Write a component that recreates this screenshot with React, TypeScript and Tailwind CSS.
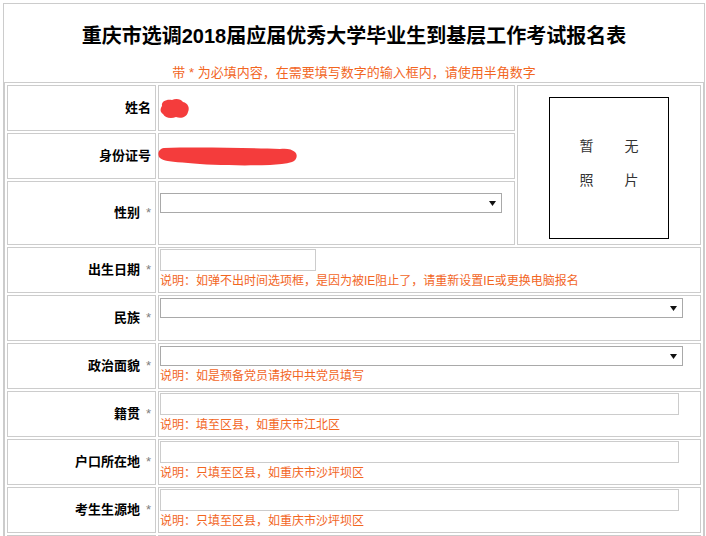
import type { ReactNode } from 'react';

type Field = {
  label: string;
  required?: boolean;
  kind: 'select' | 'input';
  width: string;
  note?: string;
};

// Rows below the photo block: each one is a label cell and a single value
// cell spanning the photo column.
const FIELDS: Field[] = [
  {
    label: '出生日期',
    required: true,
    kind: 'input',
    width: 'w-[156px]',
    note: '说明：如弹不出时间选项框，是因为被IE阻止了，请重新设置IE或更换电脑报名',
  },
  { label: '民族', required: true, kind: 'select', width: 'w-[523px]' },
  {
    label: '政治面貌',
    required: true,
    kind: 'select',
    width: 'w-[523px]',
    note: '说明：如是预备党员请按中共党员填写',
  },
  {
    label: '籍贯',
    required: true,
    kind: 'input',
    width: 'w-[519px]',
    note: '说明：填至区县，如重庆市江北区',
  },
  {
    label: '户口所在地',
    required: true,
    kind: 'input',
    width: 'w-[519px]',
    note: '说明：只填至区县，如重庆市沙坪坝区',
  },
  {
    label: '考生生源地',
    required: true,
    kind: 'input',
    width: 'w-[519px]',
    note: '说明：只填至区县，如重庆市沙坪坝区',
  },
  // next row starts at the fold; only its top edge shows
  { label: '', kind: 'input', width: 'w-[519px]' },
];

function Label({ text, required }: { text: string; required?: boolean }) {
  return (
    <td className="w-[149px] border border-[#cccccc] p-px pr-[4px] text-right align-middle text-[13px] font-bold text-black">
      {text}
      {required && <span className="ml-[6px] font-normal text-[#808080]">*</span>}
    </td>
  );
}

function FakeSelect({ width }: { width: string }) {
  return (
    <div
      className={`${width} flex h-[20px] items-center justify-end border border-[#a9a9a9] bg-white pr-[5px]`}
    >
      <svg width="7" height="5" viewBox="0 0 7 5">
        <path d="M0 0h7L3.5 5z" fill="#111" />
      </svg>
    </div>
  );
}

function Note({ children }: { children?: ReactNode }) {
  return (
    <div className="h-[20px] whitespace-nowrap text-[12px] leading-[20px] text-[#f2661f]">
      {children}
    </div>
  );
}

function Redacted({ long }: { long?: boolean }) {
  if (long) {
    return (
      <svg className="-ml-[2px] block" width="141" height="19" viewBox="0 0 141 19">
        <path
          d="M6 1C40 0 90 1 122 2C128 1 134 2 137 5C140 8 139 13 134 15C128 17 120 17 112 18C80 19 50 18 30 16C15 15 5 14 2 11C-1 8 0 2 6 1Z"
          fill="#f43c3c"
        />
      </svg>
    );
  }
  return (
    <svg className="-ml-px block" width="31" height="21" viewBox="0 0 31 21">
      <path
        d="M3 8C2 3 8 1 13 2C17 0 22 1 24 4C29 5 31 10 29 14C28 19 22 21 17 19C12 21 6 20 4 16C1 14 1 11 3 8Z"
        fill="#f43c3c"
      />
    </svg>
  );
}

export default function App() {
  return (
    <div className="h-[536px] overflow-hidden bg-white font-['Liberation_Sans','Noto_Sans_CJK_SC',sans-serif]">
      <div className="ml-[3px] mt-[3px] w-[702px] border border-[#cccccc]">
        <h1 className="pt-[18px] text-center text-[20px] font-bold leading-[28px] text-black">
          重庆市选调2018届应届优秀大学毕业生到基层工作考试报名表
        </h1>
        <p className="mt-[14px] text-center text-[13px] leading-[18px] text-[#f2661f]">
          带 * 为必填内容，在需要填写数字的输入框内，请使用半角数字
        </p>

        <table className="w-[700px] table-fixed border-separate border-spacing-[2px] border border-[#cccccc]">
          <tbody>
            <tr className="h-[46px]">
              <Label text="姓名" />
              <td className="w-[357px] border border-[#cccccc] p-px align-middle">
                <Redacted />
              </td>
              <td rowSpan={3} className="border border-[#cccccc] p-px align-middle">
                {/* photo placeholder */}
                <div className="mx-auto mt-[6px] flex h-[142px] w-[120px] flex-col items-center gap-[16px] border border-black pt-[39px] text-[14px] leading-[18px] text-[#333]">
                  <div className="flex gap-[31px]">
                    <span>暂</span>
                    <span>无</span>
                  </div>
                  <div className="flex gap-[31px]">
                    <span>照</span>
                    <span>片</span>
                  </div>
                </div>
              </td>
            </tr>
            <tr className="h-[46px]">
              <Label text="身份证号" />
              <td className="border border-[#cccccc] p-px align-middle">
                <Redacted long />
              </td>
            </tr>
            <tr className="h-[64px]">
              <Label text="性别" required />
              <td className="border border-[#cccccc] p-px align-middle">
                <FakeSelect width="w-[342px]" />
                <Note />
              </td>
            </tr>

            {FIELDS.map((f, i) => (
              <tr key={i} className="h-[46px]">
                <Label text={f.label} required={f.required} />
                <td colSpan={2} className="border border-[#cccccc] p-px align-middle">
                  {f.kind === 'select' ? (
                    <FakeSelect width={f.width} />
                  ) : (
                    <input
                      type="text"
                      className={`${f.width} block h-[22px] border border-[#cccccc] bg-white`}
                    />
                  )}
                  <Note>{f.note}</Note>
                </td>
              </tr>
            ))}
          </tbody>
        </table>
      </div>
    </div>
  );
}
